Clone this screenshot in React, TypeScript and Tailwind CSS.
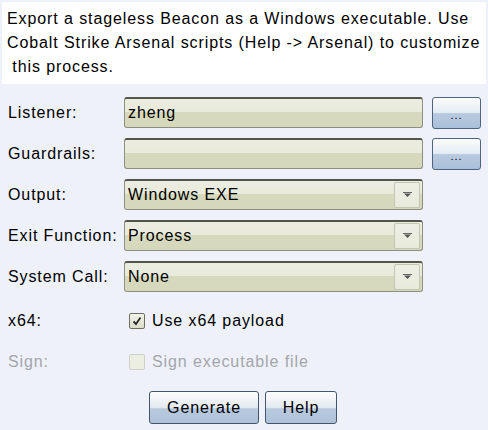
import React from "react";

function Field({ value, dropdown }: { value?: string; dropdown?: boolean }) {
  return (
    <div className="relative h-[31px] w-[299px] rounded-[3px] border border-[#8e8f7e] border-t-2 border-t-[#54554a] bg-[linear-gradient(#ecede1_0%,#e8eadb_45%,#d6d9bd_45%,#d5d8bb_100%)] flex items-center pl-[3px]">
      <span className="text-[16px] leading-none text-black">{value}</span>
      {dropdown && (
        <div className="absolute right-[2px] top-[1px] h-[26px] w-[26px] rounded-[2px] border border-[#c4c6b3] bg-[linear-gradient(#eeefe4_0%,#e8eadc_100%)] flex items-center justify-center">
          <svg width="9" height="6" viewBox="0 0 9 6">
            <rect x="0" y="0" width="9" height="1" fill="#666" />
            <path d="M1 1.5 L8 1.5 L4.5 5 Z" fill="#555" />
          </svg>
        </div>
      )}
    </div>
  );
}

function DotsButton() {
  return (
    <button className="relative h-[32px] w-[49px] rounded-[3px] border border-[#4d6381] bg-[linear-gradient(#fbfcfe_0%,#e5ecf4_48%,#b9cadf_52%,#a9bfd9_100%)] flex items-end justify-center pb-[7px]">
      <span className="text-[11px] leading-none text-black tracking-[1px]">...</span>
    </button>
  );
}

function Checkbox({ checked, disabled }: { checked?: boolean; disabled?: boolean }) {
  return (
    <div
      className={
        disabled
          ? "h-[16px] w-[16px] rounded-[2px] border border-[#cfd0c6] bg-[#eceee2]"
          : "h-[16px] w-[16px] rounded-[2px] border border-[#6d6e60] bg-[linear-gradient(#f3f4ea,#dcdec9)] flex items-center justify-center"
      }
    >
      {checked && (
        <svg width="10" height="10" viewBox="0 0 10 10">
          <path d="M1.5 5.5 L4 8 L8.5 1.5" stroke="#2b2b2b" strokeWidth="1.8" fill="none" />
        </svg>
      )}
    </div>
  );
}

function ActionButton({ label, w }: { label: string; w: string }) {
  return (
    <button
      className={`${w} h-[33px] rounded-[3px] border border-[#44566e] bg-[linear-gradient(#fdfdfe_0%,#e3e9f1_50%,#b8c9dd_54%,#aec2da_100%)] text-[16px] text-black tracking-[0.9px]`}
    >
      {label}
    </button>
  );
}

export default function App() {
  const labels = ["Listener:", "Guardrails:", "Output:", "Exit Function:", "System Call:"];
  const values = ["zheng", "", "Windows EXE", "Process", "None"];
  return (
    <div className="w-[488px] h-[430px] bg-[#eef1f9] pt-[2px] font-['Liberation_Sans',Arial,sans-serif] text-[16px] tracking-[0.9px] text-black">
      <div className="mx-[2px] h-[82px] bg-white px-[5px] pt-[5px] leading-[24px]">
        <div>Export a stageless Beacon as a Windows executable. Use</div>
        <div>Cobalt Strike Arsenal scripts (Help -&gt; Arsenal) to customize</div>
        <div>{"\u00a0this process."}</div>
      </div>

      <div className="mt-[13px] pl-[8px] flex flex-col gap-[10px]">
        {labels.map((l, i) => (
          <div key={l} className="flex items-center h-[31px]">
            <div className="w-[116px]">{l}</div>
            <Field value={values[i]} dropdown={i >= 2} />
            {i < 2 && (
              <div className="ml-[9px]">
                <DotsButton />
              </div>
            )}
          </div>
        ))}
      </div>

      <div className="pl-[8px] mt-[13px] flex items-center h-[31px]">
        <div className="w-[121px]">x64:</div>
        <Checkbox checked />
        <span className="ml-[7px]">Use x64 payload</span>
      </div>
      <div className="pl-[8px] mt-[10px] flex items-center h-[31px] text-[#a4a6ab]">
        <div className="w-[121px]">Sign:</div>
        <Checkbox disabled />
        <span className="ml-[7px]">Sign executable file</span>
      </div>

      <div className="mt-[14px] flex justify-center gap-[6px] pr-[2px]">
        <ActionButton label="Generate" w="w-[110px]" />
        <ActionButton label="Help" w="w-[72px]" />
      </div>
    </div>
  );
}
